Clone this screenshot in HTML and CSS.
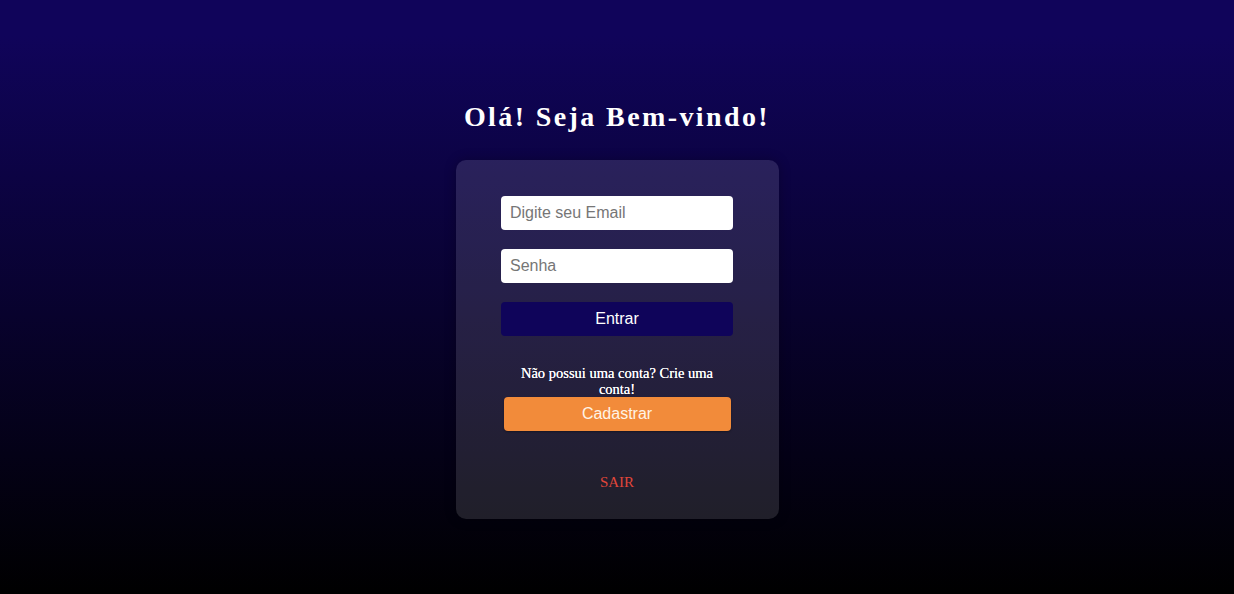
FILE: index.html
```html
<!DOCTYPE html>
<html lang="pt-BR">
<head>
<meta charset="utf-8">
<title>Login</title>
<link rel="stylesheet" href="styles.css">
</head>
<body>
<main class="page">
  <h1 class="title">Olá! Seja Bem-vindo!</h1>
  <section class="card">
    <form class="form">
      <input class="field" type="email" placeholder="Digite seu Email">
      <input class="field" type="password" placeholder="Senha">
      <button class="btn btn-enter" type="button">Entrar</button>
    </form>
    <p class="signup-text">Não possui uma conta? Crie uma conta!</p>
    <button class="btn btn-signup" type="button">Cadastrar</button>
    <a class="exit" href="#">SAIR</a>
  </section>
</main>
</body>
</html>
```
FILE: styles.css
```css
html, body {
  margin: 0;
  padding: 0;
  height: 100%;
}
body {
  background: linear-gradient(to bottom, #10045a 0%, #10045a 6%, #000000 100%);
  font-family: "Liberation Serif", "Times New Roman", serif;
  color: #fff;
}
.page {
  height: 594px;
  display: flex;
  flex-direction: column;
  align-items: center;
  padding-top: 100px;
  box-sizing: border-box;
}
.title {
  margin: 0;
  font-size: 28px;
  font-weight: bold;
  letter-spacing: 2.4px;
  line-height: 34px;
  color: #fff;
}
.card {
  margin-top: 26px;
  width: 323px;
  height: 359px;
  box-sizing: border-box;
  border-radius: 10px;
  background: rgba(255,255,255,0.12);
  box-shadow: 0 0 12px rgba(0,0,0,0.25);
  display: flex;
  flex-direction: column;
  align-items: center;
  padding-top: 36px;
}
.form {
  width: 232px;
  display: flex;
  flex-direction: column;
  gap: 19px;
}
.field {
  height: 34px;
  box-sizing: border-box;
  border: none;
  border-radius: 4px;
  background: #fff;
  padding: 0 9px;
  font-family: "Liberation Sans", Arial, sans-serif;
  font-size: 16px;
  color: #333;
}
.field::placeholder {
  color: #767676;
}
.btn {
  height: 34px;
  border: none;
  border-radius: 4px;
  font-family: "Liberation Sans", Arial, sans-serif;
  font-size: 16px;
  color: #fff;
  cursor: pointer;
}
.btn-enter {
  width: 232px;
  background: #0f045a;
}
.signup-text {
  margin: 29px 0 0;
  width: 210px;
  text-align: center;
  font-size: 14.5px;
  line-height: 16px;
  text-shadow: 0 0 0.2px #fff;
}
.btn-signup {
  width: 227px;
  margin-top: 0;
  background: #f28b3a;
  color: #fff4e6;
  box-shadow: 0 1px 2px rgba(0,0,0,0.35);
}
.exit {
  margin-top: 43px;
  color: #e0463a;
  text-decoration: none;
  font-size: 15px;
}
```
